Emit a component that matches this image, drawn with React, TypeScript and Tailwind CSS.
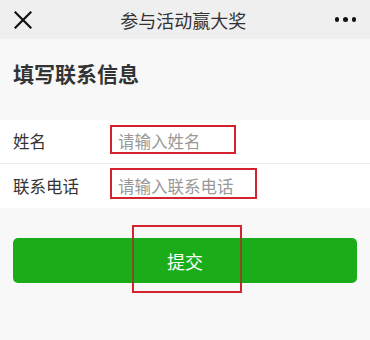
import React from "react";

const font = { fontFamily: '"Noto Sans CJK SC", "Noto Sans", sans-serif' };

export default function App() {
  return (
    <div className="w-[370px] h-[340px] bg-[#f8f8f8] overflow-hidden" style={font}>
      <div className="h-[39px] bg-[#efefef] flex items-center justify-between px-[14px]">
        <svg width="18" height="18" viewBox="0 0 18 18">
          <path d="M1.5 1.5 L16.5 16.5 M16.5 1.5 L1.5 16.5" stroke="#111" strokeWidth="2.2" strokeLinecap="square" />
        </svg>
        <div className="text-[18px] text-[#333] leading-none">参与活动赢大奖</div>
        <div className="flex items-center gap-[4px] pr-[-2px]">
          <span className="w-[4.5px] h-[4.5px] rounded-full bg-[#111]" />
          <span className="w-[4.5px] h-[4.5px] rounded-full bg-[#111]" />
          <span className="w-[4.5px] h-[4.5px] rounded-full bg-[#111]" />
        </div>
      </div>
      <div className="h-[81px] flex items-center px-[13px] pb-[12px]">
        <h1 className="text-[21px] font-bold text-[#333] leading-none">填写联系信息</h1>
      </div>
      <div className="bg-white">
        <div className="h-[44px] flex items-center border-b border-[#ececec]">
          <div className="w-[110px] pl-[13px] text-[16.5px] text-[#333] leading-none">姓名</div>
          <div className="relative flex-1 h-full flex items-center">
            <span className="pl-[8px] text-[16.5px] text-[#999] leading-none">请输入姓名</span>
            <div className="absolute left-0 top-[5px] w-[126px] h-[29px] border-2 border-[#d2232f]" />
          </div>
        </div>
        <div className="h-[44px] flex items-center">
          <div className="w-[110px] pl-[13px] text-[16.5px] text-[#333] leading-none">联系电话</div>
          <div className="relative flex-1 h-full flex items-center">
            <span className="pl-[8px] text-[16.5px] text-[#999] leading-none">请输入联系电话</span>
            <div className="absolute left-0 top-[4px] w-[147px] h-[31px] border-2 border-[#d2232f]" />
          </div>
        </div>
      </div>
      <div className="px-[13px] pt-[30px] relative">
        <button className="w-full h-[45px] rounded-[5px] bg-[#1aad19] text-white text-[18px] leading-none">
          提交
        </button>
        <div className="absolute left-[132px] top-[17px] w-[110px] h-[68px] border-2 border-[#d2232f]">
          <div className="absolute left-[-2px] top-[11px] w-[2px] h-[45px] bg-[#8a4a1c]" />
          <div className="absolute right-[-2px] top-[11px] w-[2px] h-[45px] bg-[#8a4a1c]" />
        </div>
      </div>
    </div>
  );
}
